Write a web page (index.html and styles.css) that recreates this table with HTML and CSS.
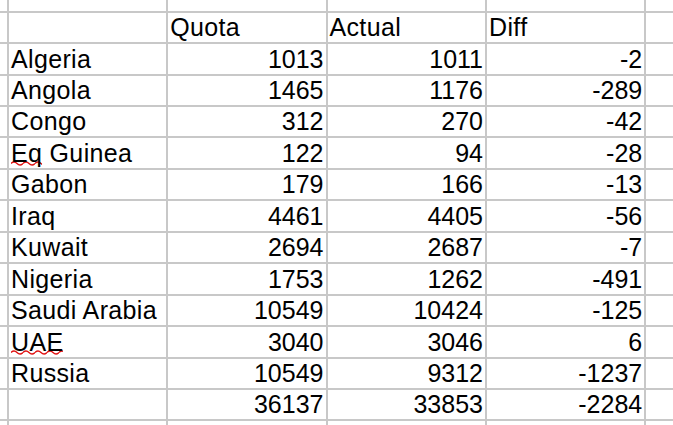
FILE: index.html
```html
<!DOCTYPE html>
<html>
<head>
<meta charset="utf-8">
<link rel="stylesheet" href="styles.css">
</head>
<body>
<div class="sheet">
  <div class="c"></div><div class="c"></div><div class="c"></div><div class="c"></div><div class="c"></div><div class="c"></div>

  <div class="c"></div><div class="c"></div><div class="c t">Quota</div><div class="c t">Actual</div><div class="c t">Diff</div><div class="c"></div>

  <div class="c"></div><div class="c t">Algeria</div><div class="c n">1013</div><div class="c n">1011</div><div class="c n">-2</div><div class="c"></div>
  <div class="c"></div><div class="c t">Angola</div><div class="c n">1465</div><div class="c n">1176</div><div class="c n">-289</div><div class="c"></div>
  <div class="c"></div><div class="c t">Congo</div><div class="c n">312</div><div class="c n">270</div><div class="c n">-42</div><div class="c"></div>
  <div class="c"></div><div class="c t"><span class="spell">Eq</span>&nbsp;Guinea</div><div class="c n">122</div><div class="c n">94</div><div class="c n">-28</div><div class="c"></div>
  <div class="c"></div><div class="c t">Gabon</div><div class="c n">179</div><div class="c n">166</div><div class="c n">-13</div><div class="c"></div>
  <div class="c"></div><div class="c t">Iraq</div><div class="c n">4461</div><div class="c n">4405</div><div class="c n">-56</div><div class="c"></div>
  <div class="c"></div><div class="c t">Kuwait</div><div class="c n">2694</div><div class="c n">2687</div><div class="c n">-7</div><div class="c"></div>
  <div class="c"></div><div class="c t">Nigeria</div><div class="c n">1753</div><div class="c n">1262</div><div class="c n">-491</div><div class="c"></div>
  <div class="c"></div><div class="c t">Saudi Arabia</div><div class="c n">10549</div><div class="c n">10424</div><div class="c n">-125</div><div class="c"></div>
  <div class="c"></div><div class="c t"><span class="spell">UAE</span></div><div class="c n">3040</div><div class="c n">3046</div><div class="c n">6</div><div class="c"></div>
  <div class="c"></div><div class="c t">Russia</div><div class="c n">10549</div><div class="c n">9312</div><div class="c n">-1237</div><div class="c"></div>
  <div class="c"></div><div class="c"></div><div class="c n">36137</div><div class="c n">33853</div><div class="c n">-2284</div><div class="c"></div>

  <div class="c"></div><div class="c"></div><div class="c"></div><div class="c"></div><div class="c"></div><div class="c"></div>
</div>
</body>
</html>
```

FILE: styles.css
```css
html, body {
  margin: 0;
  padding: 0;
  background: #ffffff;
  overflow: hidden;
}

.sheet {
  display: grid;
  grid-template-columns: 9px 159.25px 159.25px 159.5px 159.25px 40px;
  grid-template-rows: 12.7px repeat(13, 31.45px) 20px;
  width: 673px;
  height: 425px;
  overflow: hidden;
  font-family: "Liberation Sans", Arial, sans-serif;
  font-size: 25px;
  line-height: 25px;
  color: #000000;
}

.c {
  box-sizing: border-box;
  border-right: 2px solid #c8c8c8;
  border-bottom: 2px solid #c8c8c8;
  display: flex;
  align-items: flex-end;
  padding: 0 2px 2px 2px;
  white-space: nowrap;
  overflow: hidden;
}

.t {
  letter-spacing: 0.35px;
}

.n {
  justify-content: flex-end;
}

.spell {
  background-image: url("data:image/svg+xml,%3Csvg xmlns='http://www.w3.org/2000/svg' width='12' height='5' viewBox='0 0 12 5'%3E%3Cpath d='M0 2.5 Q3 -0.5 6 2.5 T12 2.5' fill='none' stroke='%23e01010' stroke-width='1.4'/%3E%3C/svg%3E");
  background-repeat: repeat-x;
  background-size: 12px 5px;
  background-position: 0 100%;
}
```
